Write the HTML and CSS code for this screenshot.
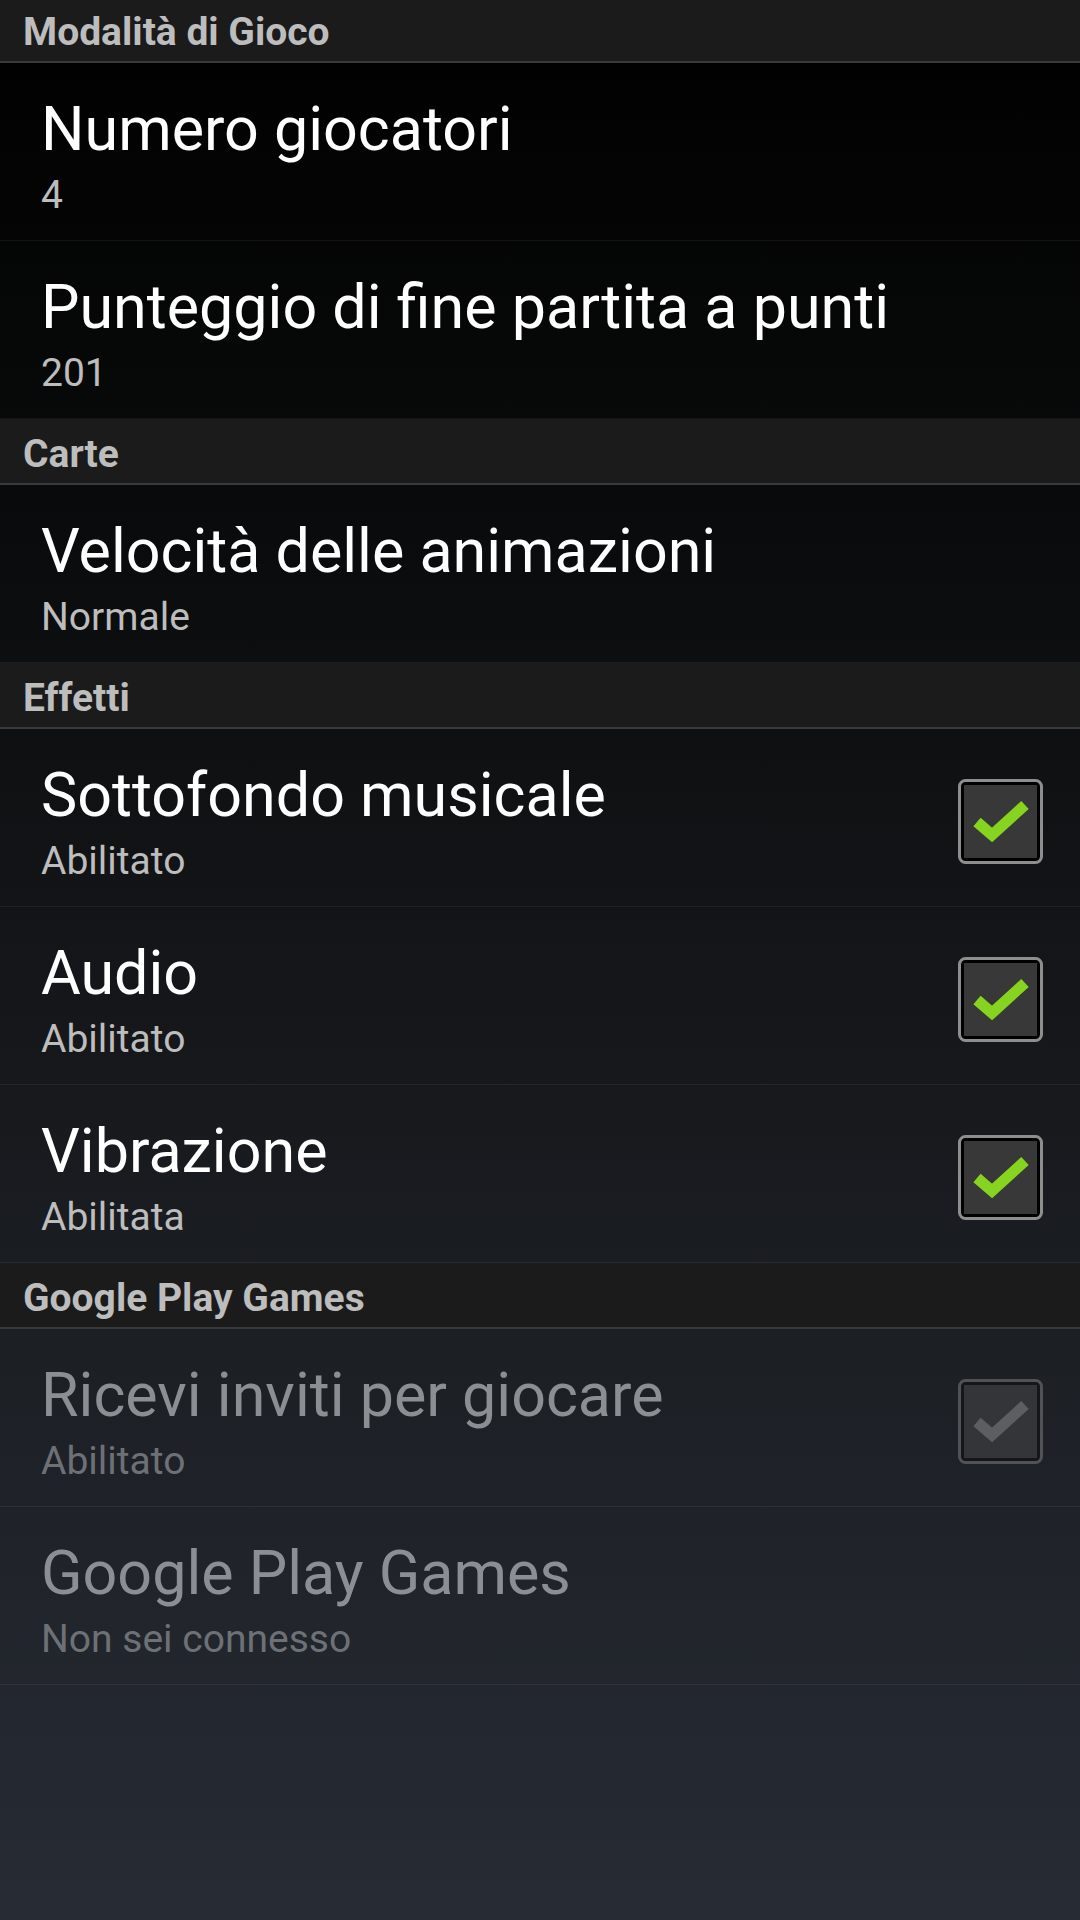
FILE: index.html
```html
<!DOCTYPE html>
<html lang="it">
<head>
<meta charset="utf-8">
<title>Impostazioni</title>
<link rel="stylesheet" href="styles.css">
</head>
<body>
<div class="list">
  <div class="cat">Modalità di Gioco</div>
  <div class="pref">
    <div class="texts"><div class="title">Numero giocatori</div><div class="summary">4</div></div>
  </div>
  <div class="pref">
    <div class="texts"><div class="title">Punteggio di fine partita a punti</div><div class="summary">201</div></div>
  </div>

  <div class="cat">Carte</div>
  <div class="pref">
    <div class="texts"><div class="title">Velocità delle animazioni</div><div class="summary">Normale</div></div>
  </div>

  <div class="cat">Effetti</div>
  <div class="pref">
    <div class="texts"><div class="title">Sottofondo musicale</div><div class="summary">Abilitato</div></div>
    <svg class="check" viewBox="0 0 85 85" width="85" height="85"><rect x="1.5" y="1.5" width="82" height="82" rx="6" fill="#000" stroke="#8e8e8e" stroke-width="3"/><rect x="6" y="6" width="73" height="73" fill="#383838"/><polyline points="19,43 34,56 67,26" fill="none" stroke="#86d41f" stroke-width="11"/></svg>
  </div>
  <div class="pref">
    <div class="texts"><div class="title">Audio</div><div class="summary">Abilitato</div></div>
    <svg class="check" viewBox="0 0 85 85" width="85" height="85"><rect x="1.5" y="1.5" width="82" height="82" rx="6" fill="#000" stroke="#8e8e8e" stroke-width="3"/><rect x="6" y="6" width="73" height="73" fill="#383838"/><polyline points="19,43 34,56 67,26" fill="none" stroke="#86d41f" stroke-width="11"/></svg>
  </div>
  <div class="pref">
    <div class="texts"><div class="title">Vibrazione</div><div class="summary">Abilitata</div></div>
    <svg class="check" viewBox="0 0 85 85" width="85" height="85"><rect x="1.5" y="1.5" width="82" height="82" rx="6" fill="#000" stroke="#8e8e8e" stroke-width="3"/><rect x="6" y="6" width="73" height="73" fill="#383838"/><polyline points="19,43 34,56 67,26" fill="none" stroke="#86d41f" stroke-width="11"/></svg>
  </div>

  <div class="cat">Google Play Games</div>
  <div class="pref disabled">
    <div class="texts"><div class="title">Ricevi inviti per giocare</div><div class="summary">Abilitato</div></div>
    <svg class="check" viewBox="0 0 85 85" width="85" height="85"><rect x="1.5" y="1.5" width="82" height="82" rx="6" fill="#141618" stroke="#505256" stroke-width="3"/><rect x="6" y="6" width="73" height="73" fill="#333538"/><polyline points="19,43 34,56 67,26" fill="none" stroke="#5c5e61" stroke-width="11"/></svg>
  </div>
  <div class="pref disabled">
    <div class="texts"><div class="title">Google Play Games</div><div class="summary">Non sei connesso</div></div>
  </div>
</div>
</body>
</html>
```

FILE: styles.css
```css
html, body {
  margin: 0;
  padding: 0;
}
body {
  width: 1080px;
  height: 1920px;
  overflow: hidden;
  background: linear-gradient(to bottom, #000000 0%, #0b0c0d 30%, #1c1f24 70%, #272b34 100%);
  font-family: Roboto, "Noto Sans", "Liberation Sans", sans-serif;
}
.list {
  margin-top: -3px;
}
.cat {
  height: 58px;
  padding: 6px 0 0 23px;
  line-height: 58px;
  font-size: 39px;
  font-weight: 700;
  color: #bdbdbd;
  background: #1b1b1b;
  border-bottom: 2px solid #3a3a3a;
}
.pref {
  height: 177px;
  display: flex;
  justify-content: space-between;
  border-bottom: 1px solid rgba(255, 255, 255, 0.06);
}
.texts {
  padding: 28px 0 0 41px;
}
.title {
  font-size: 61px;
  line-height: 77px;
  color: #ffffff;
  white-space: nowrap;
}
.summary {
  padding-top: 1px;
  font-size: 39px;
  line-height: 52px;
  color: #bdbdbd;
}
.check {
  align-self: center;
  margin-right: 37px;
  margin-top: 8px;
  flex: none;
}
.disabled .title {
  color: #8b8e93;
}
.disabled .summary {
  color: #6d7176;
}
```
